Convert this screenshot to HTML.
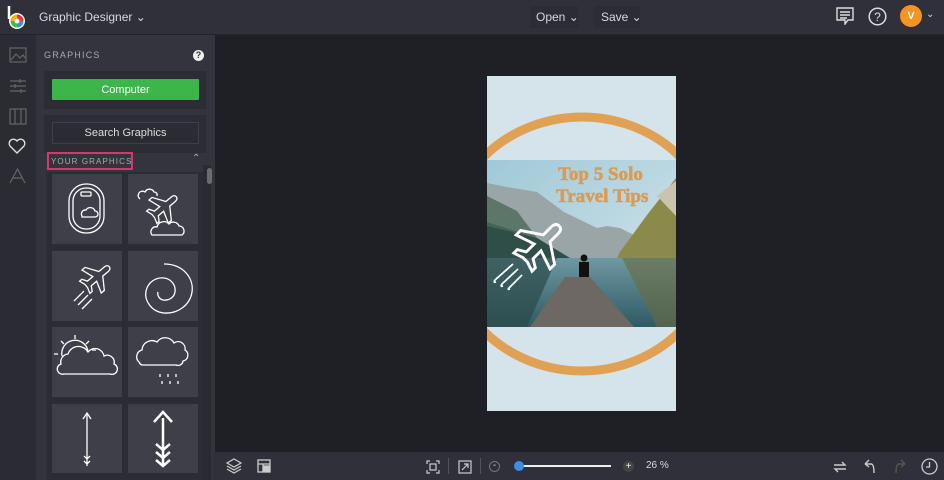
<!DOCTYPE html>
<html><head><meta charset="utf-8"><style>
*{margin:0;padding:0;box-sizing:border-box}
body{width:944px;height:480px;overflow:hidden;background:#1f2025;font-family:"Liberation Sans",sans-serif;position:relative;color:#e6e6ea}
.abs{position:absolute}
#top{left:0;top:0;width:944px;height:35px;background:#2f3039;border-bottom:1px solid #23242a}
#rail{left:0;top:35px;width:36px;height:445px;background:#2a2b33}
#panel{left:36px;top:35px;width:179px;height:445px;background:#33343d}
.box{background:#2b2c34}
.tile{background:#3e3f49;width:70px;height:70px}
#bot{left:214px;top:452px;width:730px;height:28px;background:#2f3039}
.btn{font-size:12px;color:#d8d8de}
</style></head><body>
<div id="top" class="abs">
 <svg class="abs" style="left:6px;top:5px" width="22" height="26" viewBox="0 0 22 26">
  <path d="M3 1 V14" stroke="#fff" stroke-width="2.5"/>
  <circle cx="11" cy="16" r="8" fill="#fff"/>
  <path d="M11 16 L11 9.5 A6.5 6.5 0 0 1 17.5 16Z" fill="#e33"/>
  <path d="M11 16 L17.5 16 A6.5 6.5 0 0 1 11 22.5Z" fill="#3b8ee8"/>
  <path d="M11 16 L11 22.5 A6.5 6.5 0 0 1 4.5 16Z" fill="#4bb84b"/>
  <path d="M11 16 L4.5 16 A6.5 6.5 0 0 1 11 9.5Z" fill="#f5b400"/>
  <circle cx="11" cy="16" r="2.5" fill="#fff"/>
 </svg>
 <div class="abs btn" style="left:39px;top:10px;font-size:12px">Graphic Designer ⌄</div>
 <div class="abs" style="left:530px;top:6px;width:48px;height:22px;background:#2b2c34"></div>
 <div class="abs btn" style="left:536px;top:10px">Open ⌄</div>
 <div class="abs" style="left:595px;top:6px;width:45px;height:22px;background:#2b2c34"></div>
 <div class="abs btn" style="left:601px;top:10px">Save ⌄</div>
 <svg class="abs" style="left:836px;top:7px" width="18" height="18" viewBox="0 0 18 18" fill="none" stroke="#ddd" stroke-width="1.4"><path d="M1 1H17V13H12L9 17V13H1Z"/><path d="M4 5H14M4 8H14M4 11H11"/></svg>
 <svg class="abs" style="left:868px;top:7px" width="19" height="19" viewBox="0 0 19 19"><circle cx="9.5" cy="9.5" r="8.3" fill="none" stroke="#ddd" stroke-width="1.5"/><text x="9.5" y="14" text-anchor="middle" font-size="12" fill="#ddd" font-family="Liberation Sans">?</text></svg>
 <div class="abs" style="left:900px;top:5px;width:22px;height:22px;border-radius:50%;background:#f7931e;color:#fff;font-size:11px;font-weight:bold;text-align:center;line-height:22px">V</div>
 <div class="abs btn" style="left:926px;top:9px;font-size:10px">⌄</div>
</div>
<div id="rail" class="abs">
 <svg class="abs" style="left:9px;top:12px" width="18" height="16" fill="none" stroke="#666" stroke-width="1.2"><rect x="1" y="1" width="16" height="14"/><path d="M2 13L7 7L11 11L14 8L16 11"/></svg>
 <svg class="abs" style="left:9px;top:42px" width="18" height="18" fill="none" stroke="#666" stroke-width="1.2"><path d="M1 4H17M1 9H17M1 14H17"/><path d="M11 2V6M6 7V11M12 12V16"/></svg>
 <svg class="abs" style="left:9px;top:73px" width="18" height="17" fill="none" stroke="#666" stroke-width="1.2"><rect x="1" y="1" width="16" height="15"/><path d="M6 1V16M12 1V16"/></svg>
 <svg class="abs" style="left:8px;top:103px" width="18" height="16" fill="none" stroke="#ddd" stroke-width="1.4"><path d="M9 15L2 8A4 4 0 0 1 9 3A4 4 0 0 1 16 8Z"/></svg>
 <svg class="abs" style="left:9px;top:133px" width="17" height="16" fill="none" stroke="#666" stroke-width="1.2"><path d="M1 15L8.5 1L16 15M4 10H13"/></svg>
</div>
<div id="panel" class="abs">
 <div class="abs" style="left:8px;top:15px;font-size:9px;letter-spacing:1.2px;color:#aaa">GRAPHICS</div>
 <div class="abs" style="left:157px;top:15px;width:11px;height:11px;border-radius:50%;background:#eee;color:#333;font-size:9px;font-weight:bold;text-align:center;line-height:11px">?</div>
 <div class="abs box" style="left:8px;top:36px;width:162px;height:38px"></div>
 <div class="abs" style="left:16px;top:44px;width:147px;height:21px;background:#3cb54a;border-radius:1px;color:#fff;font-size:11px;display:flex;align-items:center;justify-content:center">Computer</div>
 <div class="abs box" style="left:8px;top:80px;width:162px;height:38px"></div>
 <div class="abs" style="left:16px;top:87px;width:147px;height:22px;border:1px solid #3e3f48;background:#2a2b33;color:#ddd;font-size:11px;display:flex;align-items:center;justify-content:center">Search Graphics</div>
 <div class="abs" style="left:11px;top:117px;width:86px;height:18px;border:2px solid #d23a6b"></div>
 <div class="abs" style="left:15px;top:122px;font-size:8px;letter-spacing:1.1px;color:#aaa">YOUR GRAPHICS</div>
 <div class="abs" style="left:156px;top:118px;font-size:10px;color:#aaa">⌃</div>
 <div class="abs" style="left:10px;top:137px;width:158px;height:308px;background:#2b2c34"></div>
</div>
<!-- tiles -->
<div class="abs tile" style="left:52px;top:174px"></div>
<div class="abs tile" style="left:128px;top:174px"></div>
<div class="abs tile" style="left:52px;top:251px"></div>
<div class="abs tile" style="left:128px;top:251px"></div>
<div class="abs tile" style="left:52px;top:327px"></div>
<div class="abs tile" style="left:128px;top:327px"></div>
<div class="abs tile" style="left:52px;top:404px;height:69px"></div>
<div class="abs tile" style="left:128px;top:404px;height:69px"></div>
<svg class="abs" style="left:52px;top:174px" width="146" height="300" fill="none" stroke="#fff" stroke-width="1.3">
 <rect x="17" y="10" width="35" height="49" rx="17"/><rect x="21" y="14" width="27" height="41" rx="13"/>
 <rect x="29" y="18" width="10" height="4" rx="1"/><path d="M30 42a4 4 0 0 1 4-6a5 5 0 0 1 9 1a3 3 0 0 1 0 6H30Z"/>
 <path d="M88 25a4 4 0 0 1 5-7a5 5 0 0 1 9 0a3 3 0 0 1 3 4"/>
 <g transform="translate(112,33) rotate(-40)"><path d="M16 0Q16 -3 12 -3H5L-3 -15H-7L-3 -3H-10L-13 -8H-16L-14 -2V2L-16 8H-13L-10 3H-3L-7 15H-3L5 3H12Q16 3 16 0Z"/></g>
 <path d="M100 61a5 5 0 0 1 5-8a7 7 0 0 1 12-3a6 6 0 0 1 10 2a5 5 0 0 1 3 9Z"/>
 <g transform="translate(45,103) rotate(-40)"><path d="M16 0Q16 -3 12 -3H5L-3 -15H-7L-3 -3H-10L-13 -8H-16L-14 -2V2L-16 8H-13L-10 3H-3L-7 15H-3L5 3H12Q16 3 16 0Z"/></g>
 <path d="M22 127l10-10M26 131l10-10M30 135l10-10"/>
 <path d="M112 90c20 0 30 15 28 28c-2 13-14 22-28 21c-12-1-20-12-18-22c2-9 10-14 18-13c8 1 12 8 11 14c-1 6-7 9-12 8c-4-1-6-5-5-8"/>
 <path d="M9 190a8 8 0 0 1 7-10a11 11 0 0 1 20-2a9 9 0 0 1 16 4a7 7 0 0 1 10 8a5 5 0 0 1-4 10H12a5 5 0 0 1-3-10Z"/>
 <path d="M10 182a13 13 0 0 1 26-5"/><path d="M23 165v-4M12 170l-3-3M34 170l3-3M6 180H2M40 176h4"/>
 <path d="M87 188a7 7 0 0 1 3-12a10 10 0 0 1 15-8a10 10 0 0 1 17 1a7 7 0 0 1 11 7a6 6 0 0 1-2 11a5 5 0 0 1-7 4H90a5 5 0 0 1-3-3Z"/>
 <path d="M108 200v3M116 200v3M124 200v3M110 207v3M118 207v3M126 207v3"/>
 <path d="M35 240V292M31 245l4-6l4 6M32 282l3 3l3-3M32 287l3 3l3-3"/>
 <path d="M111 244V292" stroke-width="2.5"/><path d="M102 248l9-10l9 10" stroke-width="2.5"/>
 <path d="M104 270l7 6l7-6M104 278l7 6l7-6M104 286l7 6l7-6" stroke-width="2.5"/>
</svg>
<!-- canvas -->
<svg class="abs" style="left:487px;top:76px" width="189" height="335" viewBox="0 0 189 335">
 <defs>
  <linearGradient id="sky" x1="0" y1="0" x2="1" y2="1"><stop offset="0" stop-color="#9fc9d8"/><stop offset="1" stop-color="#d6e6ea"/></linearGradient>
  <linearGradient id="water" x1="0" y1="0" x2="0" y2="1"><stop offset="0" stop-color="#6f98a2"/><stop offset="1" stop-color="#2f5a63"/></linearGradient>
 </defs>
 <rect width="189" height="335" fill="#d4e4ea"/>
 <ellipse cx="95" cy="168" rx="135" ry="127" fill="none" stroke="#e0a154" stroke-width="9"/>
 <rect x="0" y="84" width="189" height="167" fill="url(#sky)"/>
 <path d="M0 107L20 111L50 116L77 136L110 152L120 150L133 152L147 159L150 182L0 182Z" fill="#9aa5a8"/>
 <path d="M0 146L50 162L83 182L0 182Z" fill="#2f4e48"/>
 <path d="M0 120L30 135L50 162L0 150Z" fill="#4c6a5a" opacity=".8"/>
 <path d="M133 176L160 139L189 102L189 182L130 182Z" fill="#8b8a4a"/>
 <path d="M170 120L189 105L189 140Z" fill="#c8c4b0"/>
 <rect x="0" y="182" width="189" height="69" fill="url(#water)"/>
 <path d="M0 182L70 182L40 251L0 251Z" fill="#2c4a48" opacity=".7"/>
 <path d="M135 182L189 182L189 251L170 251Z" fill="#6a6b40" opacity=".6"/>
 <path d="M78 201L103 201L147 251L43 251Z" fill="#6e6862"/>
 <path d="M92 186h10v15h-10z" fill="#111"/><circle cx="97" cy="182" r="3.5" fill="#111"/>
 <text x="71" y="104" font-family="Liberation Serif" font-weight="bold" font-size="19" fill="#dc9a52" stroke="#dc9a52" stroke-width=".6">Top 5 Solo</text>
 <text x="69" y="126" font-family="Liberation Serif" font-weight="bold" font-size="19" fill="#dc9a52" stroke="#dc9a52" stroke-width=".6">Travel Tips</text>
 <g fill="none" stroke="#fff" stroke-width="1.8">
  <g transform="translate(54,168) rotate(-45) scale(1.6)"><path d="M16 0Q16 -3 12 -3H5L-3 -15H-7L-3 -3H-10L-13 -8H-16L-14 -2V2L-16 8H-13L-10 3H-3L-7 15H-3L5 3H12Q16 3 16 0Z"/></g>
  <path d="M26 188L8 204Q6 207 9 206M31 193L15 208Q13 211 16 210M35 199L22 212Q20 214 23 213"/>
 </g>
</svg>
<!-- scrollbar col -->
<div class="abs" style="left:203px;top:165px;width:8px;height:315px;background:#2a2b32"></div>
<div class="abs" style="left:207px;top:168px;width:5px;height:16px;border-radius:3px;background:#6a6b73"></div>
<div id="bot" class="abs">
 <svg class="abs" style="left:12px;top:6px" width="16" height="16" fill="none" stroke="#ccc" stroke-width="1.2"><path d="M8 1L15 5L8 9L1 5Z"/><path d="M1 8L8 12L15 8M1 11L8 15L15 11"/></svg>
 <svg class="abs" style="left:43px;top:7px" width="14" height="14" fill="none" stroke="#ccc" stroke-width="1.3"><rect x="1" y="1" width="12" height="12"/><path d="M1 5H13M6 5V13"/><rect x="7" y="7" width="5" height="5" fill="#ccc"/></svg>
 <svg class="abs" style="left:212px;top:8px" width="14" height="14" fill="none" stroke="#ccc" stroke-width="1.2"><path d="M1 4V1H4M10 1H13V4M13 10V13H10M4 13H1V10"/><rect x="4" y="4" width="6" height="6"/></svg>
 <div class="abs" style="left:234px;top:6px;width:1px;height:16px;background:#555"></div>
 <svg class="abs" style="left:244px;top:8px" width="14" height="14" fill="none" stroke="#ccc" stroke-width="1.2"><rect x="1" y="1" width="12" height="12"/><path d="M4 10L10 4M6 4H10V8"/></svg>
 <div class="abs" style="left:266px;top:6px;width:1px;height:16px;background:#555"></div>
 <div class="abs" style="left:275px;top:9px;width:11px;height:11px;border-radius:50%;border:1px solid #777;color:#ccc;font-size:10px;line-height:8px;text-align:center">-</div>
 <div class="abs" style="left:302px;top:13px;width:95px;height:2px;background:#eee"></div>
 <div class="abs" style="left:300px;top:9px;width:10px;height:10px;border-radius:50%;background:#3b8ee8"></div>
 <div class="abs" style="left:409px;top:9px;width:11px;height:11px;border-radius:50%;background:#444;color:#eee;font-size:10px;line-height:11px;text-align:center">+</div>
 <div class="abs" style="left:432px;top:8px;font-size:10px;color:#ddd">26 %</div>
 <svg class="abs" style="left:618px;top:7px" width="16" height="16" fill="none" stroke="#ccc" stroke-width="1.4"><path d="M2 6H13L10 3M14 10H3L6 13"/></svg>
 <svg class="abs" style="left:648px;top:6px" width="16" height="16" fill="none" stroke="#ccc" stroke-width="1.4"><path d="M3 6L7 2M3 6L7 9M3 6H9Q12 6 12 15"/></svg>
 <svg class="abs" style="left:678px;top:6px" width="16" height="16" fill="none" stroke="#555" stroke-width="1.4"><path d="M13 6L9 2M13 6L9 9M13 6H7Q4 6 4 15"/></svg>
 <svg class="abs" style="left:707px;top:6px" width="17" height="17" fill="none" stroke="#ccc" stroke-width="1.3"><circle cx="8.5" cy="8.5" r="7.5"/><path d="M8.5 4V9H5"/></svg>
</div>
</body></html>
